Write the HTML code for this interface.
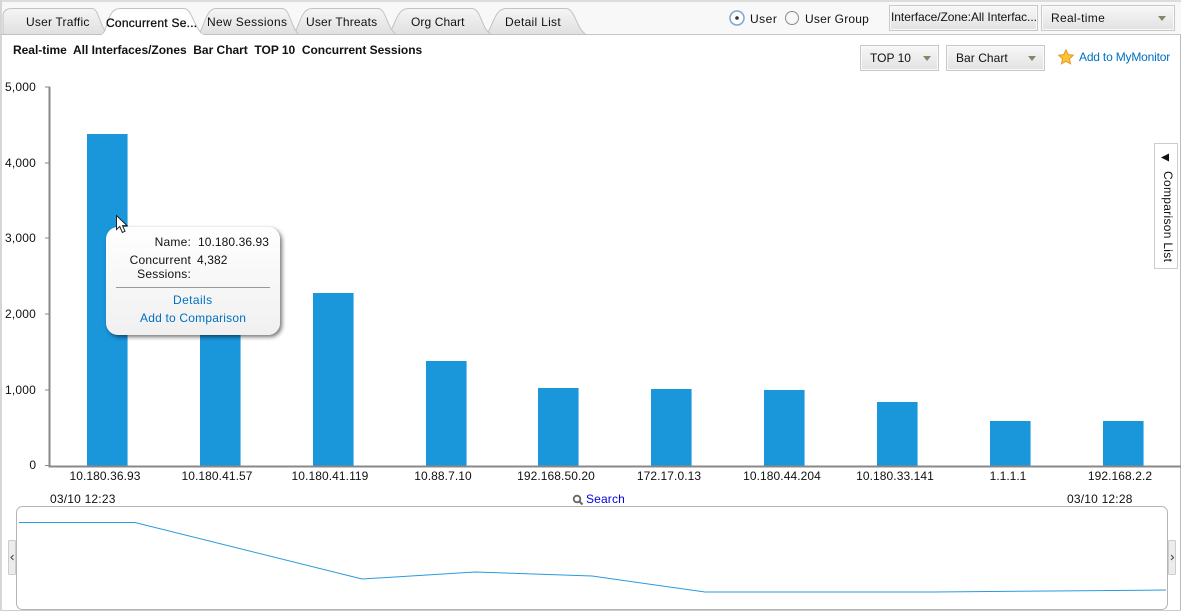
<!DOCTYPE html>
<html><head><meta charset="utf-8"><style>
html,body{margin:0;padding:0;background:#fff}
#p{position:relative;width:1181px;height:611px;overflow:hidden;background:#fff;font:12px/14px "Liberation Sans",sans-serif;color:#111}
.t{position:absolute;white-space:nowrap}
.r{text-align:right}
.c{text-align:center}
.l{color:#0070c0}
.b{position:absolute;background:#1a96db;border-right:1px solid #7cc4ee;box-sizing:border-box}
.btn{position:absolute;box-sizing:border-box;border:1px solid #c8c8c8;background:linear-gradient(#f7f7f7,#e2e2e2);box-shadow:inset 0 0 0 1px #fafafa}
.tri{position:absolute;width:0;height:0;border-left:4px solid transparent;border-right:4px solid transparent;border-top:5px solid #8a8468}
</style></head><body><div id="p">
<div style="position:absolute;left:0;top:0;width:1181px;height:34px;background:#f8f8f8;border-top:2px solid #ddd;box-sizing:border-box"></div>
<div style="position:absolute;left:0;top:0;width:2px;height:611px;background:#d6d6d6"></div>
<div style="position:absolute;left:1180px;top:34px;width:1px;height:577px;background:#bbb"></div>
<div style="position:absolute;left:2px;top:610px;width:1179px;height:1px;background:#ccc"></div>
<svg width="1181" height="40" style="position:absolute;left:0;top:0">
<defs><linearGradient id="g" x1="0" y1="0" x2="0" y2="1"><stop offset="0" stop-color="#f5f5f5"/><stop offset="1" stop-color="#e0e0e0"/></linearGradient></defs>
<path d="M0 34.500H1181" stroke="#c6c6c6" fill="none"/>
<g fill="url(#g)" stroke="#c2c2c2">
<path d="M486 34.500C492 30 494 8.500 506 8.500H566C575 8.500 576 28 586 34.500Z"/>
<path d="M388 34.500C394 30 396 8.500 408 8.500H472C481 8.500 481 28 491 34.500Z"/>
<path d="M293 34.500C299 30 300 8.500 312 8.500H378C386 8.500 387 28 396 34.500Z"/>
<path d="M198 34.500C204 30 205 8.500 216 8.500H282C290 8.500 291 28 299 34.500Z"/>
<path d="M3 34.500V16C3 11 6 8.500 12 8.500H92C99 8.500 100 28 108 34.500Z"/>
</g>
<path d="M102 34.500C108 30 107 8.500 120 8.500H184C192 8.500 194 28 203 34.500" fill="#fff" stroke="#c2c2c2"/>
<path d="M102 34.500H203" stroke="#fff" stroke-width="1.500"/>
<circle cx="737" cy="18" r="7" fill="#fff" stroke="#7aa6d6" stroke-width="1.500"/>
<circle cx="737" cy="18" r="1.800" fill="#333"/>
<circle cx="792" cy="18" r="6.500" fill="#f8f8f8" stroke="#8a8a8a"/>
</svg>
<div class="t" style="left:26px;top:15px;letter-spacing:.2px">User Traffic</div>
<div class="t" style="left:106px;top:16px;letter-spacing:.25px;-webkit-text-stroke:.3px #111">Concurrent Se...</div>
<div class="t" style="left:207px;top:15px;letter-spacing:.36px">New Sessions</div>
<div class="t" style="left:306px;top:15px;letter-spacing:.18px">User Threats</div>
<div class="t" style="left:411px;top:15px;letter-spacing:.1px">Org Chart</div>
<div class="t" style="left:505px;top:15px;letter-spacing:.3px">Detail List</div>
<div class="t" style="left:750px;top:12px;letter-spacing:.5px">User</div>
<div class="t" style="left:805px;top:12px;letter-spacing:.2px">User Group</div>
<div class="btn" style="left:889px;top:5px;width:149px;height:26px"></div>
<div class="t" style="left:891px;top:10px;letter-spacing:-.05px">Interface/Zone:All Interfac...</div>
<div class="btn" style="left:1041px;top:5px;width:134px;height:26px"></div>
<div class="t" style="left:1051px;top:11px;letter-spacing:.3px">Real-time</div>
<div class="tri" style="left:1158px;top:16px"></div>
<div class="t" style="left:13px;top:43px;font-weight:700;letter-spacing:-.02px">Real-time&nbsp; All Interfaces/Zones&nbsp; Bar Chart&nbsp; TOP 10&nbsp; Concurrent Sessions</div>
<div class="btn" style="left:860px;top:45px;width:79px;height:26px"></div>
<div class="t" style="left:870px;top:51px">TOP 10</div>
<div class="tri" style="left:923px;top:56px"></div>
<div class="btn" style="left:946px;top:45px;width:99px;height:26px"></div>
<div class="t" style="left:956px;top:51px;letter-spacing:.05px">Bar Chart</div>
<div class="tri" style="left:1028px;top:56px"></div>
<svg width="16" height="16" style="position:absolute;left:1058px;top:49px"><path d="M8 .8L10.200 5.600 15.300 6.200 11.500 9.700 12.500 14.800 8 12.300 3.500 14.800 4.500 9.700 .7 6.200 5.800 5.600Z" fill="#fbc531" stroke="#e8962a"/></svg>
<div class="t l" style="left:1079px;top:50px;letter-spacing:-.19px">Add to MyMonitor</div>

<div class="t r" style="left:0;top:80px;width:36px;letter-spacing:.2px">5,000</div>
<div class="t r" style="left:0;top:156px;width:36px;letter-spacing:.2px">4,000</div>
<div class="t r" style="left:0;top:231px;width:36px;letter-spacing:.2px">3,000</div>
<div class="t r" style="left:0;top:307px;width:36px;letter-spacing:.2px">2,000</div>
<div class="t r" style="left:0;top:383px;width:36px;letter-spacing:.2px">1,000</div>
<div class="t r" style="left:0;top:458px;width:36px">0</div>

<div class="b" style="left:87px;top:134px;width:41px;height:332px"></div>
<div class="b" style="left:200px;top:300px;width:41px;height:166px"></div>
<div class="b" style="left:313px;top:293px;width:41px;height:173px"></div>
<div class="b" style="left:426px;top:361px;width:41px;height:105px"></div>
<div class="b" style="left:538px;top:388px;width:41px;height:78px"></div>
<div class="b" style="left:651px;top:389px;width:41px;height:77px"></div>
<div class="b" style="left:764px;top:390px;width:41px;height:76px"></div>
<div class="b" style="left:877px;top:402px;width:41px;height:64px"></div>
<div class="b" style="left:990px;top:421px;width:41px;height:45px"></div>
<div class="b" style="left:1103px;top:421px;width:41px;height:45px"></div>

<svg width="1181" height="611" style="position:absolute;left:0;top:0;pointer-events:none">
<path d="M49.500 87V466.500H1181" fill="none" stroke="#888" stroke-width="2"/>
<path d="M45 87H50M45 163H50M45 238H50M45 314H50M45 390H50M45 465.500H50" stroke="#888" fill="none"/>
<rect x="16.500" y="506.500" width="1151" height="103" rx="6" fill="#fff" stroke="#b4b4b4"/>
<path d="M19 522.500H135L362 579 475 572 592 576 705 592H820L935 592 1050 591 1166 590" fill="none" stroke="#2a9ade"/>
<rect x="8.500" y="540.500" width="7" height="34" rx="1" fill="#ececec" stroke="#ccc"/>
<rect x="1168.500" y="540.500" width="7" height="34" rx="1" fill="#ececec" stroke="#ccc"/>
<path d="M13.500 555L11 557.500 13.500 560" fill="none" stroke="#555" stroke-width="1.200"/>
<path d="M1171 555L1173.500 557.500 1171 560" fill="none" stroke="#555" stroke-width="1.200"/>
<circle cx="577" cy="499" r="3.300" fill="none" stroke="#666" stroke-width="1.800"/>
<path d="M579.500 501.500L582.500 504.500" stroke="#666" stroke-width="2"/>
</svg>

<div class="t c" style="left:50px;top:469px;width:110px;letter-spacing:.08px">10.180.36.93</div>
<div class="t c" style="left:162px;top:469px;width:110px;letter-spacing:.08px">10.180.41.57</div>
<div class="t c" style="left:275px;top:469px;width:110px;letter-spacing:.08px">10.180.41.119</div>
<div class="t c" style="left:388px;top:469px;width:110px;letter-spacing:.08px">10.88.7.10</div>
<div class="t c" style="left:501px;top:469px;width:110px;letter-spacing:.08px">192.168.50.20</div>
<div class="t c" style="left:614px;top:469px;width:110px;letter-spacing:.08px">172.17.0.13</div>
<div class="t c" style="left:727px;top:469px;width:110px;letter-spacing:.08px">10.180.44.204</div>
<div class="t c" style="left:840px;top:469px;width:110px;letter-spacing:.08px">10.180.33.141</div>
<div class="t c" style="left:953px;top:469px;width:110px">1.1.1.1</div>
<div class="t c" style="left:1065px;top:469px;width:110px;letter-spacing:.08px">192.168.2.2</div>
<div class="t" style="left:50px;top:492px;letter-spacing:.2px">03/10 12:23</div>
<div class="t" style="left:1067px;top:492px;letter-spacing:.2px">03/10 12:28</div>
<div class="t" style="left:586px;top:492px;color:#0000e0;letter-spacing:.15px">Search</div>

<div style="position:absolute;left:106px;top:227px;width:174px;height:108px;border-radius:12px;background:linear-gradient(#fff,#f0f0f0);box-shadow:2px 2px 4px rgba(0,0,0,.55)"></div>
<div class="t r" style="left:110px;top:235px;width:81px;letter-spacing:.2px">Name:</div>
<div class="t" style="left:198px;top:235px;letter-spacing:.08px">10.180.36.93</div>
<div class="t r" style="left:110px;top:253px;width:81px;letter-spacing:.2px">Concurrent</div>
<div class="t r" style="left:110px;top:267px;width:81px;letter-spacing:.2px">Sessions:</div>
<div class="t" style="left:197px;top:253px;letter-spacing:.1px">4,382</div>
<div style="position:absolute;left:116px;top:287px;width:154px;height:1px;background:#999"></div>
<div class="t l" style="left:173px;top:293px;letter-spacing:.4px">Details</div>
<div class="t l" style="left:140px;top:311px;letter-spacing:.2px">Add to Comparison</div>
<svg width="16" height="22" style="position:absolute;left:115px;top:214px"><path d="M1.500 1.500V15.500L4.800 12.500 7.300 18.500 10 17.200 7.500 11.600H12Z" fill="#fff" stroke="#222"/></svg>

<div style="position:absolute;left:1154px;top:143px;width:24px;height:126px;box-sizing:border-box;border:1px solid #ccc;background:#fff"></div>
<svg width="12" height="10" style="position:absolute;left:1160px;top:153px"><path d="M1 4.500L9 .5V8.500Z" fill="#111"/></svg>
<div class="t" style="left:1161px;top:171px;writing-mode:vertical-rl;letter-spacing:.3px">Comparison List</div>
</div></body></html>
